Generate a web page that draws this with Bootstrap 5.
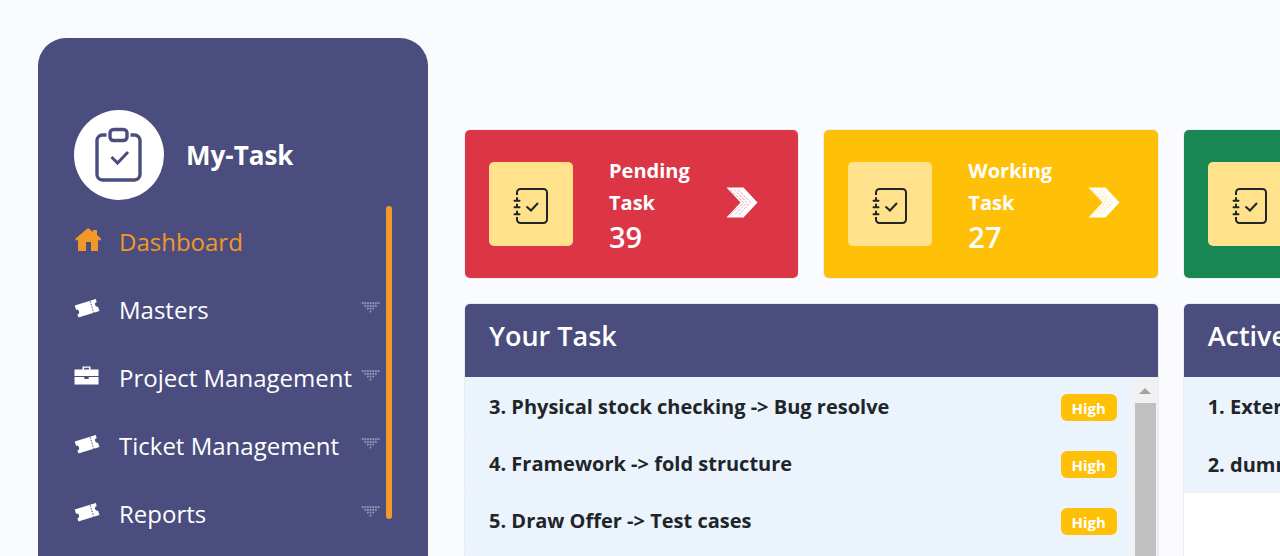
<!DOCTYPE html>
<html lang="en">
<head>
<meta charset="utf-8">
<meta name="viewport" content="width=device-width, initial-scale=1">
<title>My-Task</title>
<link href="https://cdn.jsdelivr.net/npm/bootstrap@5.3.0/dist/css/bootstrap.min.css" rel="stylesheet">
<style>
:root { --brand: #4a4d7e; --accent: #f19828; --line: #f0f0f0; --tile: #ffe28b; }
body { font-family: "Open Sans", "Noto Sans", sans-serif; background: #fafbfe; color: #212529; }
.app-shell { height: 100vh; overflow: hidden; padding: 38px 0 0 38px; }
.side-panel { flex: 0 0 390px; background: var(--brand); border-radius: 28px 28px 0 0; padding: 72px 36px 0; }
.brand-mark { width: 90px; height: 90px; margin-right: 22px; }
.brand-name { font-size: 26px; font-weight: 700; color: #fff; }
.side-menu { margin-top: 6px; padding-top: 2px; height: 352px; }
.side-link { height: 68px; font-size: 24px; color: #fff; white-space: nowrap; }
.side-link:hover, .side-link.active { color: var(--accent); }
.side-icon { width: 27px; height: 28px; margin: 0 18px 4px 0; flex: none; }
.menu-bar { top: 0; right: 0; width: 6px; height: 313px; border-radius: 3px; background: var(--accent); }
.dots { width: 19px; height: 12px; margin: 0 12px 4px auto; flex: none; opacity: .38; }
.content-area { flex: 1 1 auto; min-width: 0; overflow: hidden; padding: 92px 0 0 24px; }
.board { --bs-gutter-x: 26px; --bs-gutter-y: 26px; margin-left: 0; margin-right: 0; margin-top: -26px; min-width: 1078px; }
.stat-box { height: 148px; padding: 0 24px; gap: 36px; border-radius: 5px; color: #fff; box-shadow: 0 0 0 1px #f0f0f0; }
.stat-tile { width: 84px; height: 84px; padding-top: 4px; border-radius: 5px; background: var(--tile); }
.stat-copy { padding-top: 2px; }
.stat-label { font-size: 20px; line-height: 32px; font-weight: 700; }
.stat-value { font-size: 29px; line-height: 36px; font-weight: 600; }
.stat-arrow { margin-bottom: 3px; }
.panel-box { height: 500px; border-radius: 5px; background: #fff; overflow: hidden; box-shadow: 0 0 0 1px #ececec; }
.panel-head { height: 73px; padding: 12px 24px; background: var(--brand); color: #fff; }
.panel-head h2 { font-size: 27px; line-height: 40px; font-weight: 600; margin: 0; white-space: nowrap; }
.task-row { height: 57px; padding: 3px 16px 0 24px; background: #ebf4fc; border-bottom: 1px solid var(--line); font-size: 20px; font-weight: 700; white-space: nowrap; }
.task-row.tall { height: 58px; }
.level-tag { width: 56px; height: 27px; margin-top: 1px; border-radius: 6px; font-size: 15px; line-height: 29px; font-weight: 700; color: #fff; }
.scroll-rail { flex: 0 0 25px; background: #f1f1f1; }
.scroll-rail span { width: 21px; background: #c1c1c1; }
</style>
</head>
<body>
<svg class="d-none" aria-hidden="true">
  <symbol id="ticket" viewBox="0 0 27 28"><g transform="rotate(-17 13 14)"><path fill="#fff" d="M2 8h22v3.200a2 2 0 0 0 0 4.800V20.500H2v-3.200a2 2 0 0 0 0-4.800z"/><path stroke="#4a4d7e" stroke-width=".9" stroke-dasharray="1.500 1.300" d="M18 8.500v12"/></g></symbol>
  <symbol id="dots" viewBox="0 0 18 12"><g stroke="#fff" stroke-width="2.200" stroke-linecap="round" stroke-dasharray="0 2.650"><path d="M1.100 1.200h16"/><path d="M3.750 3.900h10.700"/><path d="M6.400 6.600h5.400"/><path d="M9.050 9.600h.01"/></g></symbol>
  <symbol id="book" viewBox="0 0 36 40"><g fill="none" stroke="#212529" stroke-width="2"><path d="M4 9V6.500A3.500 3.500 0 0 1 7.500 3h23A3.500 3.500 0 0 1 34 6.500v27a3.500 3.500 0 0 1-3.500 3.500h-23A3.500 3.500 0 0 1 4 33.500V31"/><path d="M1.500 14.700h5M1.500 21.200h5M1.500 28.200h5M4 12v2.700M4 18.500v2.700M4 25.500v2.700" stroke-linecap="round"/><path d="m13.500 20.500 4.500 4 7-7.500"/></g></symbol>
  <symbol id="chevron" viewBox="0 0 32 32"><path fill="#fff" d="M.5.500h17L31.500 15.500 17.500 30.500H.5l14-15z"/><g stroke="currentColor" stroke-width=".7" stroke-dasharray="3 1" fill="none" opacity=".65"><path d="m4 3 13.500 12.500L4 28"/><path d="m8 2.500 13 13L8 28.500"/><path d="m12 2.500 12.500 13L12 28.500"/></g></symbol>
</svg>

<div class="app-shell d-flex">
  <aside class="side-panel">
    <a href="#" class="d-flex align-items-center text-decoration-none">
      <span class="brand-mark rounded-circle bg-white d-flex align-items-center justify-content-center">
        <svg width="50" height="56" viewBox="0 0 50 56" fill="none" stroke="#4a4d7e" stroke-width="3.400" aria-hidden="true">
          <path d="M12.500 8H8.500A5.500 5.500 0 0 0 3 13.500v34A5.500 5.500 0 0 0 8.500 53h32a5.500 5.500 0 0 0 5.500-5.500v-34A5.500 5.500 0 0 0 40.500 8h-4"/>
          <rect x="16" y="2.500" width="17" height="11" rx="3.500"/>
          <path d="m17.500 30 6 6L34 25" stroke-width="3"/>
        </svg>
      </span>
      <span class="brand-name">My-Task</span>
    </a>
    <nav class="side-menu position-relative" aria-label="Main menu">
      <ul class="list-unstyled mb-0">
        <li><a href="#" class="side-link active d-flex align-items-center text-decoration-none"><svg class="side-icon" viewBox="0 0 27 28" aria-hidden="true"><path fill="currentColor" d="M1 13 14 2l5 4V4h4v5l4.500 4-2 1.800L24 13.500V25h-7v-9h-5v9H4V13.500L2.500 14.800z"/></svg>Dashboard</a></li>
        <li><a href="#" class="side-link d-flex align-items-center text-decoration-none"><svg class="side-icon"><use href="#ticket"/></svg>Masters<svg class="dots"><use href="#dots"/></svg></a></li>
        <li><a href="#" class="side-link d-flex align-items-center text-decoration-none"><svg class="side-icon" viewBox="0 0 27 28" aria-hidden="true"><path fill="#fff" fill-rule="evenodd" d="M8.500 7.500V4.500h8v3h8v6.500H.5V7.500zM10 5.800v1.700h5V5.800zM.5 15h9.800v2h4.400v-2h9.800v7.500H.5z"/></svg>Project Management<svg class="dots"><use href="#dots"/></svg></a></li>
        <li><a href="#" class="side-link d-flex align-items-center text-decoration-none"><svg class="side-icon"><use href="#ticket"/></svg>Ticket Management<svg class="dots"><use href="#dots"/></svg></a></li>
        <li><a href="#" class="side-link d-flex align-items-center text-decoration-none"><svg class="side-icon"><use href="#ticket"/></svg>Reports<svg class="dots"><use href="#dots"/></svg></a></li>
      </ul>
      <div class="menu-bar position-absolute"></div>
    </nav>
  </aside>

  <main class="content-area">
    <div class="row flex-wrap board">
      <div class="col-4"><section class="stat-box text-danger bg-danger d-flex align-items-center">
        <div class="stat-tile d-flex align-items-center justify-content-center flex-shrink-0"><svg width="36" height="40"><use href="#book"/></svg></div>
        <div class="stat-copy text-white"><div class="stat-label">Pending<br>Task</div><div class="stat-value">39</div></div>
        <svg class="stat-arrow" width="32" height="32"><use href="#chevron"/></svg>
      </section></div>
      <div class="col-4"><section class="stat-box text-warning bg-warning d-flex align-items-center">
        <div class="stat-tile d-flex align-items-center justify-content-center flex-shrink-0"><svg width="36" height="40"><use href="#book"/></svg></div>
        <div class="stat-copy text-white"><div class="stat-label">Working<br>Task</div><div class="stat-value">27</div></div>
        <svg class="stat-arrow" width="32" height="32"><use href="#chevron"/></svg>
      </section></div>
      <div class="col-4"><section class="stat-box bg-success d-flex align-items-center">
        <div class="stat-tile d-flex align-items-center justify-content-center flex-shrink-0"><svg width="36" height="40"><use href="#book"/></svg></div>
      </section></div>

      <div class="col-8"><section class="panel-box d-flex flex-column">
        <div class="panel-head"><h2>Your Task</h2></div>
        <div class="d-flex flex-grow-1">
          <div class="flex-grow-1">
            <div class="task-row d-flex align-items-center justify-content-between"><span>3. Physical stock checking -&gt; Bug resolve</span><span class="level-tag bg-warning text-center">High</span></div>
            <div class="task-row d-flex align-items-center justify-content-between"><span>4. Framework -&gt; fold structure</span><span class="level-tag bg-warning text-center">High</span></div>
            <div class="task-row d-flex align-items-center justify-content-between"><span>5. Draw Offer -&gt; Test cases</span><span class="level-tag bg-warning text-center">High</span></div>
            <div class="task-row"></div>
          </div>
          <div class="scroll-rail d-flex flex-column align-items-center" aria-hidden="true">
            <svg width="12" height="26" viewBox="0 0 12 26"><path fill="#a3a3a3" d="M0 17h12L6 11z"/></svg>
            <span class="flex-grow-1"></span>
          </div>
        </div>
      </section></div>
      <div class="col-4"><section class="panel-box">
        <div class="panel-head"><h2>Active Task</h2></div>
        <div class="task-row tall d-flex align-items-center">1. External</div>
        <div class="task-row tall d-flex align-items-center">2. dummy</div>
      </section></div>
    </div>
  </main>
</div>
<script src="https://cdn.jsdelivr.net/npm/bootstrap@5.3.0/dist/js/bootstrap.bundle.min.js"></script>
</body>
</html>
